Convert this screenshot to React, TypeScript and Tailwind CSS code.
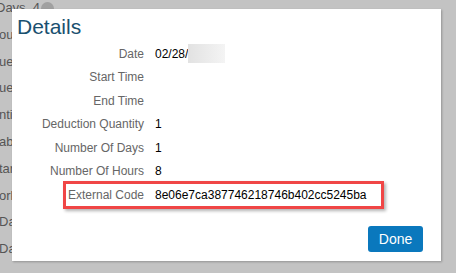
const rows: { label: string; value?: string }[] = [
  { label: "Date", value: "02/28/" },
  { label: "Start Time" },
  { label: "End Time" },
  { label: "Deduction Quantity", value: "1" },
  { label: "Number Of Days", value: "1" },
  { label: "Number Of Hours", value: "8" },
  { label: "External Code", value: "8e06e7ca387746218746b402cc5245ba" },
];

const behind = ["Days", "ours", "ues", "ues", "ntit", "able", "tart", "ork", "Date", "Date"];

export default function App() {
  return (
    <div
      className="relative h-[273px] w-[456px] overflow-hidden bg-[#c3c3c3]"
      style={{ fontFamily: "'Liberation Sans', Arial, sans-serif" }}
    >
      {/* page behind the modal */}
      <div className="-mt-[5px] flex flex-col text-[13px] leading-[26.8px] text-[#555]">
        {behind.map((t, i) => (
          <div key={i} className="flex items-center whitespace-nowrap">
            <span className={i === 0 ? "-ml-[4px]" : "-ml-[1px]"}>{t}</span>
            {i === 0 && (
              <span className="ml-[7px] flex items-center gap-[1px]">
                <span>4</span>
                <span className="h-[13px] w-[13px] rounded-full bg-[#a0a0a0]" />
              </span>
            )}
          </div>
        ))}
      </div>

      {/* modal */}
      <div className="absolute left-[12px] top-[9px] flex h-[252px] w-[429px] flex-col bg-white shadow-[1px_1px_2px_rgba(0,0,0,0.25)]">
        <h1 className="pl-[5px] pt-[5px] text-[21px] leading-[26px] text-[#1a506f]">Details</h1>
        <div className="relative mt-[2px] flex flex-col text-[12px]">
          {rows.map((r) => (
            <div key={r.label} className="flex h-[23.5px] items-center">
              <span className="w-[132px] text-right text-[#666]">{r.label}</span>
              <span className="ml-[11px] flex items-center text-black">
                {r.value}
                {r.label === "Date" && (
                  <span className="h-[19px] w-[37px] bg-gradient-to-r from-[#e2e2e2] to-[#f4f4f4]" />
                )}
              </span>
            </div>
          ))}
          {/* annotation box */}
          <div className="pointer-events-none absolute left-[51px] top-[139px] h-[28px] w-[321px] border-[3px] border-[#f04646] shadow-[2px_2px_3px_rgba(0,0,0,0.3)]" />
        </div>
        <div className="mt-auto flex justify-end pb-[9px] pr-[18px]">
          <button className="h-[26px] w-[55px] rounded-[3px] bg-[#0a78bd] text-[14px] text-white">Done</button>
        </div>
      </div>
    </div>
  );
}
